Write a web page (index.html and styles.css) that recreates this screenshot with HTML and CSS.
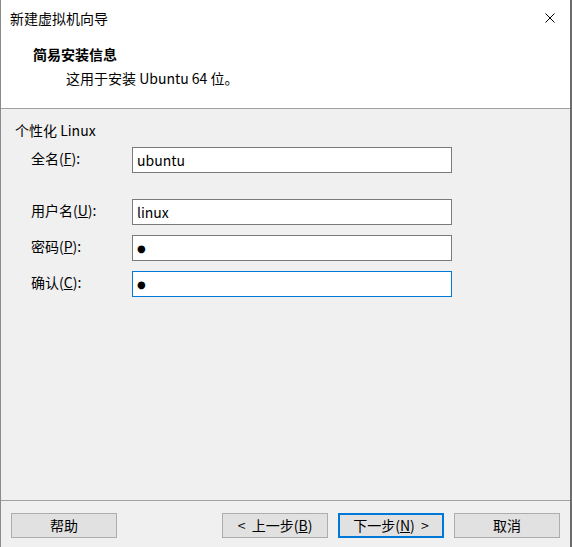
FILE: index.html
```html
<!DOCTYPE html>
<html lang="zh-CN">
<head>
    <meta charset="UTF-8">
    <title>新建虚拟机向导</title>
    <link rel="stylesheet" href="styles.css">
</head>
<body>
    <div class="wizard">
        <!-- White top part: title bar + page heading -->
        <div class="wizard-top">
            <div class="titlebar">
                <span class="title">新建虚拟机向导</span>
                <button class="close" type="button" aria-label="关闭">
                    <svg width="10" height="10" viewBox="0 0 10 10">
                        <path d="M0.5 0.5 L9.5 9.5 M9.5 0.5 L0.5 9.5" stroke="#000" stroke-width="1" fill="none"/>
                    </svg>
                </button>
            </div>
            <div class="page-head">
                <h3>简易安装信息</h3>
                <p>这用于安装 Ubuntu 64 位。</p>
            </div>
        </div>

        <!-- Form body -->
        <div class="wizard-body">
            <div class="group-title">个性化 Linux</div>
            <form class="fields">
                <label for="fullName" class="gap-after">全名(<u>F</u>):</label>
                <input type="text" id="fullName" class="gap-after" value="ubuntu">

                <label for="userName">用户名(<u>U</u>):</label>
                <input type="text" id="userName" value="linux">

                <label for="password">密码(<u>P</u>):</label>
                <input type="text" id="password" class="dots" value="●">

                <label for="confirm">确认(<u>C</u>):</label>
                <input type="text" id="confirm" class="dots focused" value="●">
            </form>
        </div>

        <!-- Bottom button row -->
        <div class="wizard-foot">
            <button type="button" class="btn">帮助</button>
            <div class="nav">
                <button type="button" class="btn">&lt;&nbsp; 上一步(<u>B</u>)</button>
                <button type="button" class="btn btn-default">下一步(<u>N</u>)&nbsp; &gt;</button>
                <button type="button" class="btn">取消</button>
            </div>
        </div>
    </div>
</body>
</html>
```

FILE: styles.css
```css
/* Windows style wizard dialog */
body {
    margin: 0;
    padding: 0;
    background: #6e6e6e;
    font-family: "Noto Sans CJK SC", sans-serif;
    font-size: 14px;
    color: #000;
}

h3, p {
    margin: 0;
    padding: 0;
}

.wizard {
    width: 569px;
    height: 547px;
    border-left: 1px solid #8a8a8a;
    border-right: 1px solid #6a6a6a;
    background-color: #f0f0f0;
    display: flex;
    flex-direction: column;
}

/* Title bar and heading */
.wizard-top {
    background-color: #fff;
    height: 108px;
    border-bottom: 1px solid #a0a0a0;
}

.titlebar {
    height: 36px;
    display: flex;
    align-items: center;
    justify-content: space-between;
    padding-left: 9px;
}

.title {
    line-height: 36px;
}

.close {
    border: none;
    background: none;
    padding: 0;
    width: 40px;
    height: 36px;
    display: flex;
    align-items: center;
    justify-content: center;
}

.page-head {
    padding-left: 32px;
    padding-top: 8px;
}

.page-head h3 {
    font-size: 14px;
    font-weight: bold;
    line-height: 21px;
}

.page-head p {
    padding-left: 33px;
    margin-top: 3px;
    line-height: 20px;
}

/* Form area */
.wizard-body {
    height: 392px;
    border-bottom: 1px solid #a0a0a0;
    padding-top: 11px;
    box-sizing: border-box;
}

.group-title {
    padding-left: 14px;
    line-height: 20px;
    margin-bottom: 7px;
}

.fields {
    display: grid;
    grid-template-columns: 101px 320px;
    row-gap: 10px;
    align-items: center;
    padding-left: 30px;
}

.fields label {
    padding-bottom: 4px;
    line-height: 20px;
}

.fields .gap-after {
    margin-bottom: 16px;
}

.fields input {
    height: 26px;
    box-sizing: border-box;
    border: 1px solid #7a7a7a;
    background: #fff;
    padding: 0 4px;
    font-family: "Noto Sans CJK SC", sans-serif;
    font-size: 14px;
    color: #000;
    outline: none;
}

.fields input.dots {
    font-family: "DejaVu Sans", sans-serif;
    font-size: 10px;
}

.fields input.focused {
    border-color: #0078d7;
}

/* Buttons */
.wizard-foot {
    display: flex;
    justify-content: space-between;
    padding: 12px 10px 0 10px;
}

.nav {
    display: flex;
    gap: 10px;
}

.btn {
    width: 106px;
    height: 25px;
    box-sizing: border-box;
    border: 1px solid #adadad;
    background-color: #e1e1e1;
    font-family: "Noto Sans CJK SC", sans-serif;
    font-size: 14px;
    color: #000;
    padding: 0;
    line-height: 21px;
}

.btn-default {
    border: 2px solid #0078d7;
}
```
